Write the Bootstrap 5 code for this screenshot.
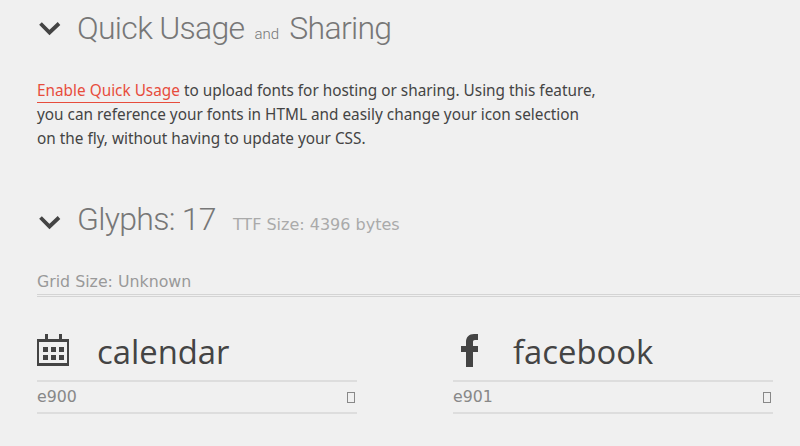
<!DOCTYPE html>
<html lang="en"><head><meta charset="utf-8"><title>Quick Usage</title>
<link rel="stylesheet" href="https://cdn.jsdelivr.net/npm/bootstrap@5.3.0/dist/css/bootstrap.min.css">
<style>
html,body{height:446px;overflow:hidden}
body{background:#f0f0f0;color:#444;font-family:"Open Sans","Noto Sans",sans-serif}
.sheet{width:800px;padding-left:37px}
.sect-head{height:55px;gap:16px;font-family:"Roboto",sans-serif;font-weight:300;color:#777;font-size:32px;line-height:51px;letter-spacing:-.7px}
.sect-head svg{flex:none}
.sect-head>span{padding-top:8px}
.sect-head small{font-size:15px;letter-spacing:0;margin:0 3px}
.glyph-head{height:50px;line-height:46px;margin-top:47px}
.sect-head.glyph-head>span{padding-top:0}
.size-note{font-family:"DejaVu Sans",sans-serif;font-size:16px;font-weight:400;color:#aaa;margin-left:17px;letter-spacing:0}
.intro{width:570px;margin:23px 0 0;font-size:15.35px;line-height:24px;color:#444;white-space:nowrap;font-family:"Noto Sans",sans-serif}
.intro a{color:#e74c3c;text-decoration:none;border-bottom:1px solid #e74c3c;padding-bottom:2px}
.grid-size{margin-top:23px;height:27px;font-family:"DejaVu Sans",sans-serif;font-size:15.8px;line-height:24px;color:#999;border-bottom:3px double #d4d4d4}
.cells{gap:96px;margin-top:21px}
.cell{width:320px}
.cell-top{height:64px;border-bottom:2px solid #ddd;align-items:center;padding-bottom:2px}
.cell-icon{width:60px;flex:none;padding-top:4px}
.cell-name{font-family:"Open Sans",sans-serif;font-size:32.800px;color:#444;line-height:40px;padding-top:7px}
.cell-foot{height:32px;border-bottom:2px solid #ddd;font-family:"DejaVu Sans",sans-serif;font-size:15.8px;color:#888}
.tofu{width:8px;height:11px;border:1px solid #888;display:block;margin-right:2px}
</style></head>
<body>
<div class="sheet">
  <div class="sect-head d-flex align-items-center">
    <svg width="24" height="16" viewBox="0 0 24 16"><path d="M3.5 3.5l9 9 9.500-9" fill="none" stroke="#444" stroke-width="3.8"/></svg>
    <span>Quick Usage <small>and</small> Sharing</span>
  </div>
  <p class="intro"><a href="#">Enable Quick Usage</a> to upload fonts for hosting or sharing. Using this feature,<br>you can reference your fonts in HTML and easily change your icon selection<br>on the fly, without having to update your CSS.</p>
  <div class="sect-head glyph-head d-flex align-items-center">
    <svg width="24" height="16" viewBox="0 0 24 16"><path d="M3.5 3.5l9 9 9.500-9" fill="none" stroke="#444" stroke-width="3.8"/></svg>
    <span>Glyphs: 17<span class="size-note">TTF Size: 4396 bytes</span></span>
  </div>
  <div class="grid-size">Grid Size: Unknown</div>
  <div class="cells d-flex">
    <div class="cell">
      <div class="cell-top d-flex">
        <div class="cell-icon"><svg width="32" height="32" viewBox="0 0 32 32" fill="#444" class="d-block"><path fill-rule="evenodd" d="M0 5h8V0h3v5h11V0h3v5h7v27H0zM2 8v21h28V8z"/><path d="M6 13h5v5H6zM14 13h5v5h-5zM22 13h5v5h-5zM6 21h5v5H6zM14 21h5v5h-5zM22 21h5v5h-5z"/></svg></div>
        <div class="cell-name">calendar</div>
      </div>
      <div class="cell-foot d-flex justify-content-between align-items-center"><span>e900</span><span class="tofu"></span></div>
    </div>
    <div class="cell">
      <div class="cell-top d-flex">
        <div class="cell-icon"><svg width="32" height="33" viewBox="0 -1 32 33" fill="#444" class="d-block"><path d="M13 32V17H8v-6h5V7c0-5 3-8 8-8h4v6h-3c-1.500 0-2 .7-2 2v4h5v6h-5v15z"/></svg></div>
        <div class="cell-name">facebook</div>
      </div>
      <div class="cell-foot d-flex justify-content-between align-items-center"><span>e901</span><span class="tofu"></span></div>
    </div>
  </div>
</div>
</body></html>
